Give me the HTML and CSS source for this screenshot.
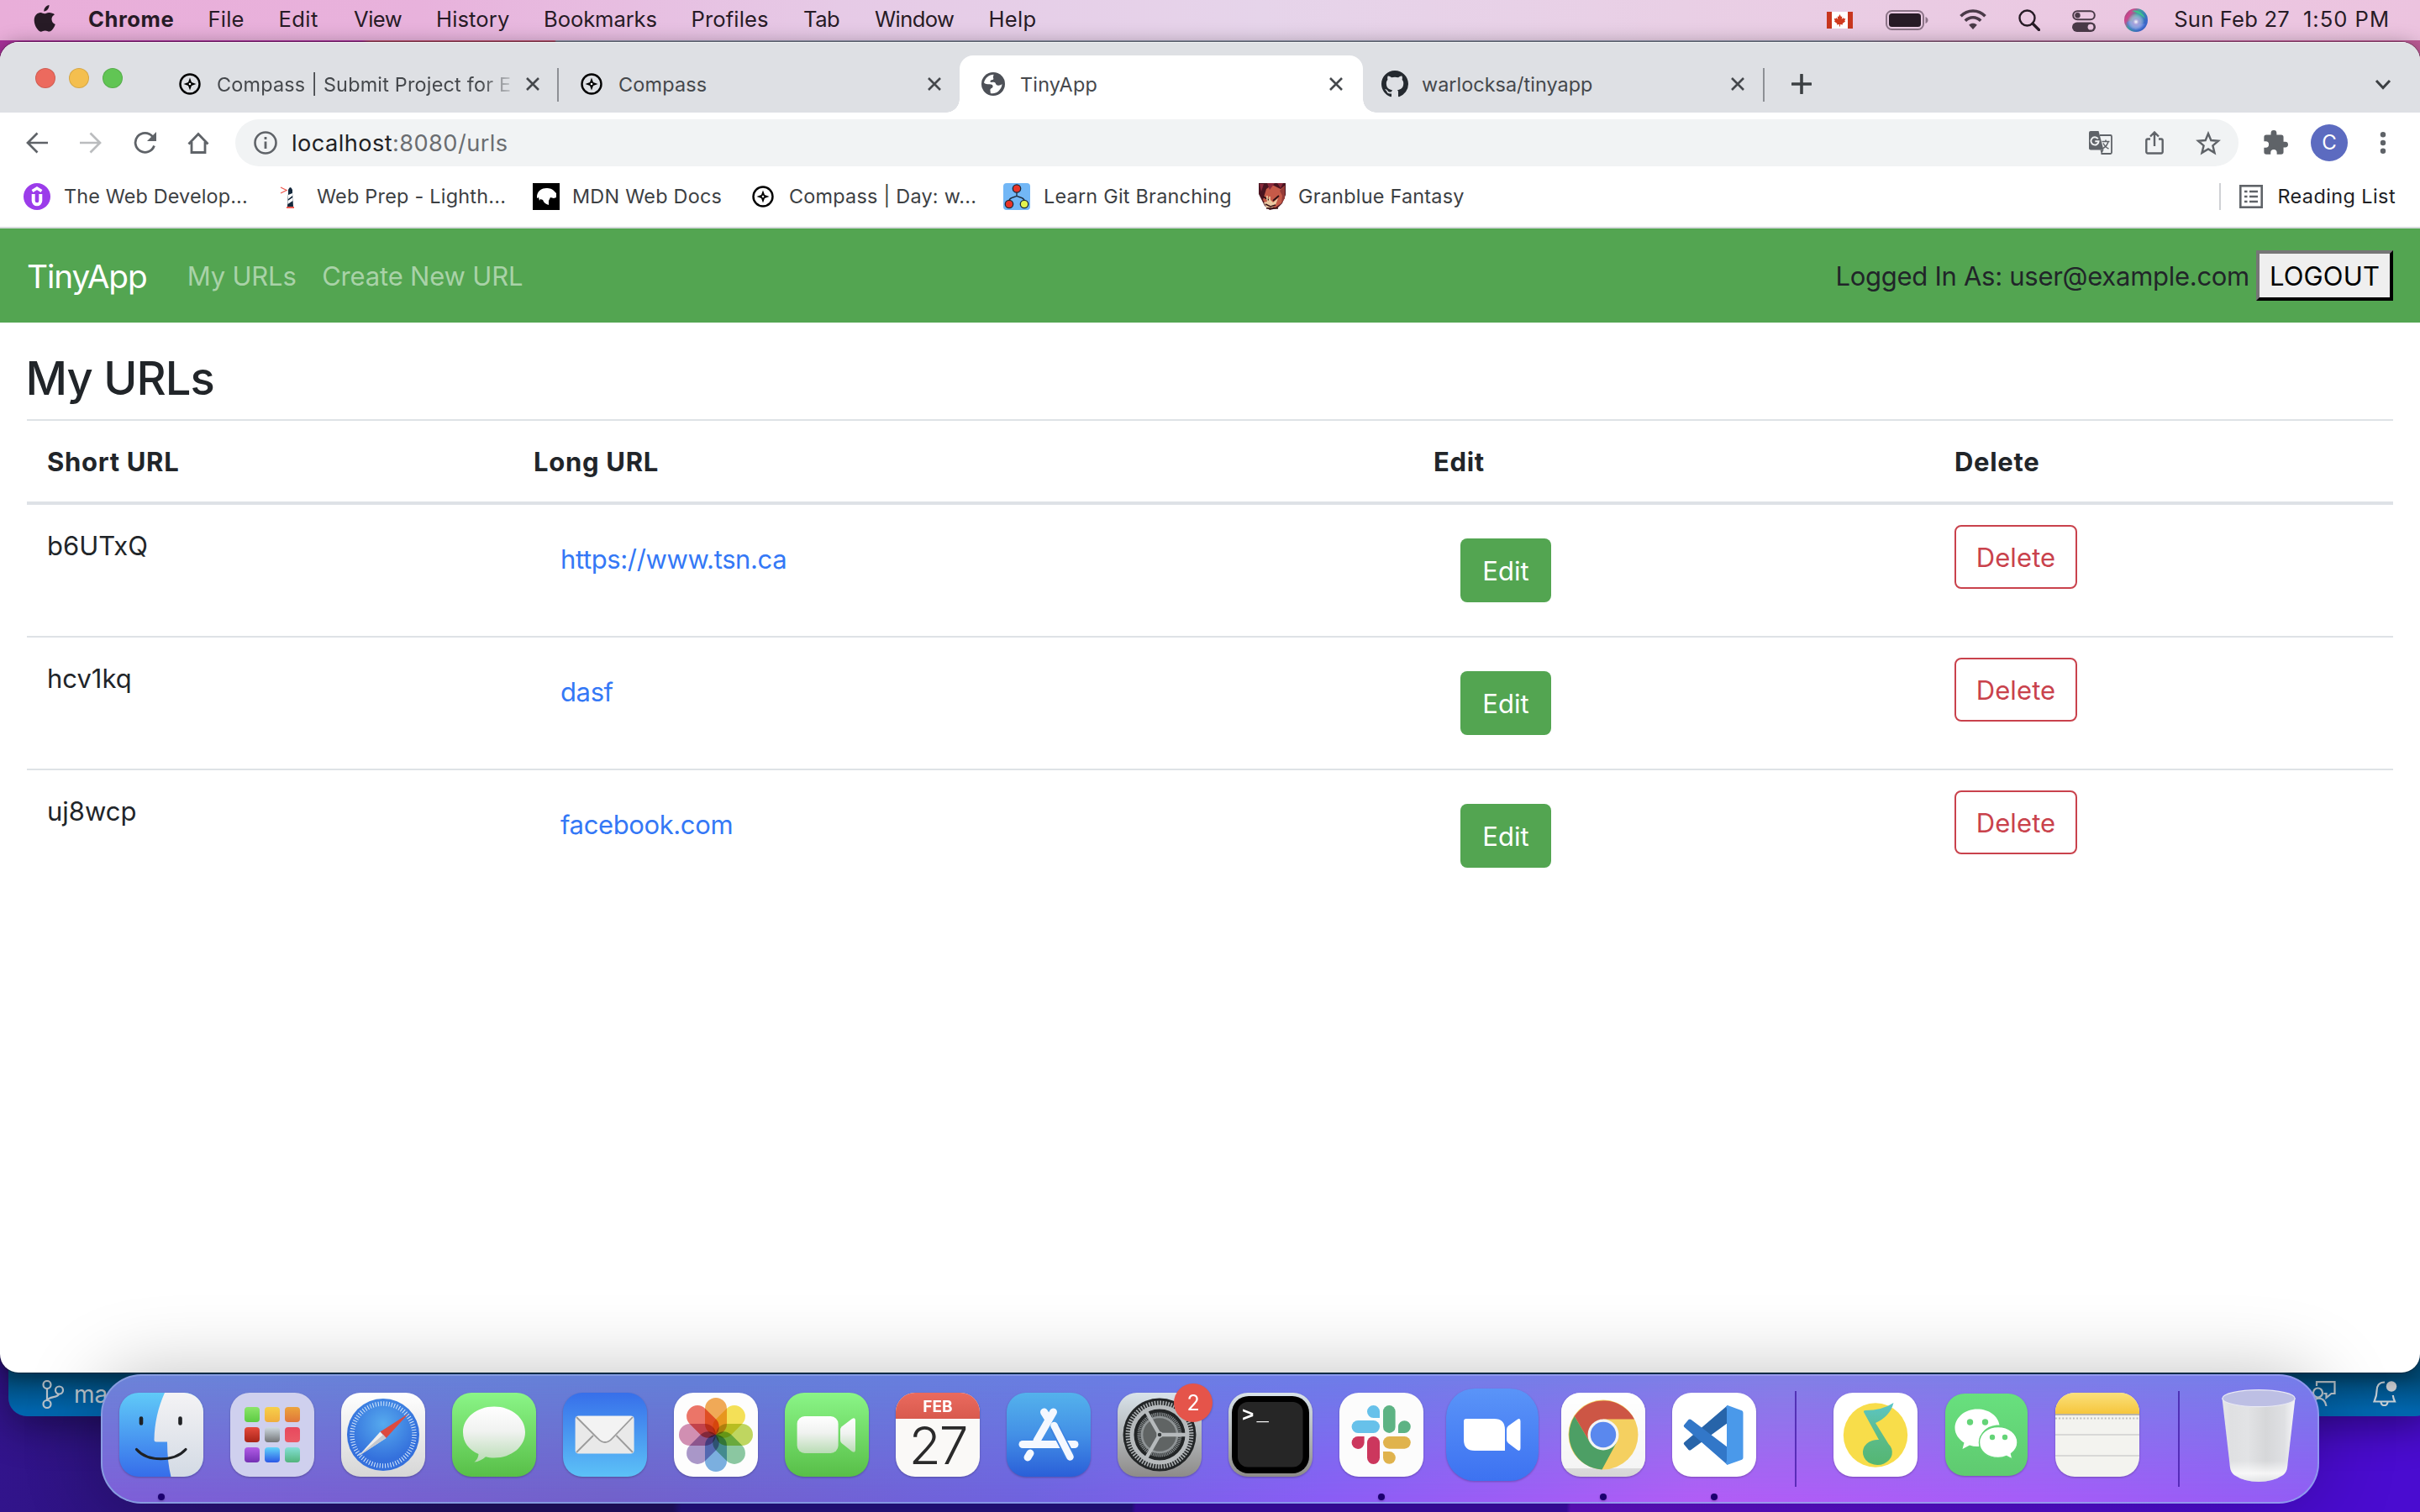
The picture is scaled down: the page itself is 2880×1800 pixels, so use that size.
FILE: index.html
```html
<!DOCTYPE html>
<html lang="en">
<head>
<meta charset="utf-8">
<title>TinyApp</title>
<link rel="stylesheet" href="styles.css">
</head>
<body>
<svg class="defs" width="0" height="0" aria-hidden="true">
  <defs>
    <symbol id="compass" viewBox="0 0 26 26"><circle cx="13" cy="13" r="11.500" fill="none" stroke="#000" stroke-width="2.400"/><path d="M13 5.500l2 5.500 5.500 2-5.500 2-2 5.500-2-5.500-5.500-2 5.500-2z" fill="#000"/><circle cx="13" cy="13" r="1.300" fill="#fff"/></symbol>
    <symbol id="close" viewBox="0 0 18 18"><path d="M2 2l14 14M16 2L2 16" stroke="#45484c" stroke-width="2.600" fill="none"/></symbol>
    <linearGradient id="gGreen" x2="0" y2="1"><stop offset="0" stop-color="#8af587"/><stop offset="1" stop-color="#58bf48"/></linearGradient>
    <linearGradient id="gWhite" x2="0" y2="1"><stop offset="0" stop-color="#fff"/><stop offset=".45" stop-color="#f0f2f0"/><stop offset="1" stop-color="#b9dcb4"/></linearGradient>
    <linearGradient id="gBlueDown" x2="0" y2="1"><stop offset="0" stop-color="#60caf8"/><stop offset="1" stop-color="#366dea"/></linearGradient>
    <linearGradient id="gMail" x2="0" y2="1"><stop offset="0" stop-color="#376fea"/><stop offset="1" stop-color="#5cc1f7"/></linearGradient>
    <linearGradient id="gStore" x2="0" y2="1"><stop offset="0" stop-color="#54b2ec"/><stop offset=".5" stop-color="#4390e6"/><stop offset="1" stop-color="#2a5fd8"/></linearGradient>
    <linearGradient id="gSilver" x2="0" y2="1"><stop offset="0" stop-color="#d9e3ea"/><stop offset="1" stop-color="#8d8b89"/></linearGradient>
    <linearGradient id="gPaper" x2="0" y2="1"><stop offset="0" stop-color="#fff"/><stop offset="1" stop-color="#d6d6d6"/></linearGradient>
    <linearGradient id="gFace" x2="0" y2="1"><stop offset="0" stop-color="#f4f3f5"/><stop offset="1" stop-color="#d3dae4"/></linearGradient>
    <radialGradient id="gSafari" cy=".35"><stop offset="0" stop-color="#56aaee"/><stop offset="1" stop-color="#3470dc"/></radialGradient>
    <linearGradient id="gZoom" x2="0" y2="1"><stop offset="0" stop-color="#5a94f8"/><stop offset="1" stop-color="#3d72f1"/></linearGradient>
    <linearGradient id="gNote" x2="0" y2="1"><stop offset="0" stop-color="#5bc6c8"/><stop offset=".5" stop-color="#5cbc8c"/><stop offset="1" stop-color="#54b672"/></linearGradient>
    <linearGradient id="gWechat" x2="0" y2="1"><stop offset="0" stop-color="#68e07e"/><stop offset="1" stop-color="#5fca70"/></linearGradient>
    <linearGradient id="gYellow" x2="0" y2="1"><stop offset="0" stop-color="#fae07c"/><stop offset="1" stop-color="#f6c63c"/></linearGradient>
    <linearGradient id="gTrash"><stop offset="0" stop-color="#e6e7e9"/><stop offset=".12" stop-color="#dfe0e2"/><stop offset=".35" stop-color="#e2e3e5"/><stop offset=".6" stop-color="#d6d7d9"/><stop offset=".85" stop-color="#dfe0e3"/><stop offset="1" stop-color="#f6f6f8"/></linearGradient>
    <linearGradient id="gTrashGlow" x2="0" y2="1"><stop offset=".75" stop-color="#fff" stop-opacity="0"/><stop offset=".9" stop-color="#fff" stop-opacity=".75"/><stop offset="1" stop-color="#e8eaec" stop-opacity=".6"/></linearGradient>
    <radialGradient id="gSiri" cx=".5" cy=".55"><stop offset="0" stop-color="#fff"/><stop offset=".35" stop-color="#b9a6e0" stop-opacity=".8"/><stop offset="1" stop-color="#fff" stop-opacity="0"/></radialGradient>
    <linearGradient id="gSiriBack" x2=".9" y2=".6"><stop offset="0" stop-color="#6d5a78"/><stop offset=".3" stop-color="#d2448e"/><stop offset=".55" stop-color="#3e9ea0"/><stop offset="1" stop-color="#3a66c8"/></linearGradient>
  </defs>
</svg>

<header class="menubar">
  <svg class="apple" viewBox="0 0 26 32"><path d="M18.500 0c.2 2-.6 3.900-1.800 5.300-1.200 1.400-2.800 2.300-4.400 2.200-.2-1.900.7-3.800 1.800-5C15.300 1.100 17.100.1 18.500 0zM25 11.200c-2.600 1.600-3.600 3.400-3.500 5.900.1 2.900 1.700 4.900 4.300 5.900-.6 1.900-1.500 3.600-2.700 5.200-1.300 1.800-2.500 3.400-4.500 3.400-1.900 0-2.500-1.100-4.900-1.100s-3.100 1.100-5 1.200c-1.900.1-3.400-1.900-4.700-3.700C1.300 24.400-.6 17.800 1.700 13.300c1.200-2.400 3.600-4.200 6.300-4.300 2-.1 3.700 1.300 5 1.300 1.200 0 3.200-1.500 5.600-1.400 2.400.1 4.900.8 6.400 2.300z" fill="#271b26"/></svg>
  <nav class="menus">
    <b>Chrome</b><span>File</span><span>Edit</span><span>View</span><span>History</span><span>Bookmarks</span><span>Profiles</span><span>Tab</span><span>Window</span><span>Help</span>
  </nav>
  <div class="status">
    <svg class="flag" viewBox="0 0 31 20"><path d="M0 0h31v20H0z" fill="#fff"/><path d="M0 0h6v20H0zM25 0h6v20h-6z" fill="#c8361e"/><path d="M15.500 3l1.500 3 1.300-.6-.5 3.500 2-1.800.5 1.200 2-.2-1 2.700.8.700-3.400 2.600.3 1.400-3-.5v2.500h-1V15l-3 .5.3-1.400-3.400-2.600.8-.7-1-2.700 2 .2.500-1.200 2 1.800-.5-3.500 1.300.6z" fill="#d03a1e"/></svg>
    <svg class="battery" viewBox="0 0 51 24"><rect x="1" y="1" width="44" height="22" rx="6.500" fill="none" stroke="#8c7488" stroke-width="2"/><rect x="4" y="4" width="38" height="16" rx="3.500" fill="#271b26"/><path d="M47.500 8c4 1.500 4 6.500 0 8z" fill="#8c7488"/></svg>
    <svg class="wifi" viewBox="0 0 32 24"><g fill="none" stroke="#4a3a48" stroke-width="3.600"><path d="M1.500 8.300C9.500-.2 22.500-.2 30.500 8.300"/><path d="M6.800 13.800c5.200-5.400 13.200-5.400 18.400 0"/></g><path d="M16 24l-4.800-5.200c2.800-2.600 6.800-2.600 9.600 0z" fill="#4a3a48"/></svg>
    <svg class="search" viewBox="0 0 26 26"><circle cx="10.500" cy="10.500" r="9" fill="none" stroke="#271b26" stroke-width="2.400"/><path d="M17 17l7.500 7.500" stroke="#271b26" stroke-width="3.200" stroke-linecap="round"/></svg>
    <svg class="control" viewBox="0 0 28 26"><rect x="1.200" y="1.200" width="25.600" height="10" rx="5" fill="none" stroke="#4a3a48" stroke-width="2"/><circle cx="6.500" cy="6.200" r="3.200" fill="#4a3a48"/><rect y="14.500" width="28" height="11.500" rx="5.750" fill="#4a3a48"/><circle cx="22" cy="20.200" r="3.400" fill="#eac6e0"/></svg>
    <svg class="siri" viewBox="0 0 28 28"><circle cx="14" cy="14" r="14" fill="url(#gSiriBack)"/><path d="M8 3q12-3 17 9-9-8-17-9z" fill="#3fc28e"/><path d="M3 17c6-6 6 4 22 1-3 10-18 12-22-1z" fill="#5a7fe0" opacity=".7"/><circle cx="14" cy="15" r="10" fill="url(#gSiri)"/></svg>
    <span class="date">Sun Feb 27</span><span class="time">1:50 PM</span>
  </div>
</header>

<section class="editor-window">
  <div class="branch"><svg viewBox="0 0 26 34"><g fill="none" stroke="#b9c3cb" stroke-width="2.200"><circle cx="6" cy="5.500" r="4.500"/><circle cx="6" cy="28.500" r="4.500"/><circle cx="20.500" cy="12" r="4.500"/><path d="M6 10v14M20 16.500c-1 5-12 2-14 8"/></g></svg><span>ma</span></div>
  <div class="editor-tools">
    <svg class="feedback" viewBox="0 0 30 30"><g fill="none" stroke="#b9c3cb" stroke-width="2.200"><path d="M7 6V1.200h21.500V15h-4l-6 5v-5h-3"/><circle cx="8.500" cy="14" r="5.500"/><path d="M1 30c1-12 16-13 17.500 0"/></g></svg>
    <svg class="bell" viewBox="0 0 30 30"><g fill="none" stroke="#c4cdd4" stroke-width="2.200"><path d="M14 1.500C7 1.500 4.500 6 4.500 12c0 6-1.500 9-3 12.500h24.500c-1.200-2.600-2-5-2.200-7.500"/><path d="M9.500 25c.5 5.500 7.500 5.500 8 0"/></g><circle cx="22" cy="6.500" r="6.200" fill="#c9ccd0"/></svg>
  </div>
</section>

<main class="browser">
  <div class="tabstrip">
    <div class="lights"><i class="red"></i><i class="amber"></i><i class="green"></i></div>
    <div class="tab t1"><svg class="fav"><use href="#compass"/></svg><span class="fade">Compass | Submit Project for E</span><svg class="x"><use href="#close"/></svg></div>
    <div class="tab t2"><svg class="fav"><use href="#compass"/></svg><span>Compass</span><svg class="x"><use href="#close"/></svg></div>
    <div class="tab t3"><svg class="globe" viewBox="0 0 28 28"><circle cx="14" cy="14" r="14" fill="#4d5057"/><path d="M14.500 2.800C9 3 4.500 6.500 3 12.500c1.500 1.800 4 1.800 6.500 1.800 3 0 4.500 1.200 4 3.200-.5 1.500-2.500 1.500-3 3-.3 1.500.5 3 .3 4.500 3 .8 7 0 9.500-2.500 2.500-2.300 4.200-5.500 4.200-8.500-1.500 1.500-3.500 2-5.500 1.500-2.500-.5-1.500-3-3.500-3.500s-4 .5-5-.5c-.5-1.500 1-2.500 2.500-2.500s1.500-1.500 1-2.500c-.4-1.200.5-2.200.5-3.700z" fill="#fff"/></svg><span>TinyApp</span><svg class="x"><use href="#close"/></svg></div>
    <div class="tab t4"><svg class="github" viewBox="0 0 16 16"><path fill="#24292f" d="M8 0C3.580 0 0 3.580 0 8c0 3.540 2.290 6.530 5.470 7.590.4.070.55-.17.55-.38 0-.19-.01-.82-.01-1.490-2.010.37-2.530-.49-2.690-.94-.09-.23-.48-.94-.82-1.130-.28-.15-.68-.52-.01-.53.63-.01 1.080.58 1.230.82.72 1.210 1.870.87 2.330.66.070-.52.28-.87.51-1.070-1.780-.2-3.640-.89-3.640-3.950 0-.87.31-1.590.82-2.150-.08-.2-.36-1.020.08-2.120 0 0 .67-.21 2.200.82.64-.18 1.320-.27 2-.27s1.360.09 2 .27c1.530-1.040 2.200-.82 2.200-.82.44 1.100.16 1.920.08 2.120.51.56.82 1.270.82 2.150 0 3.070-1.870 3.750-3.650 3.950.29.25.54.73.54 1.480 0 1.070-.01 1.930-.01 2.200 0 .21.15.46.55.38A8.010 8.010 0 0 0 16 8c0-4.420-3.580-8-8-8z"/></svg><span>warlocksa/tinyapp</span><svg class="x"><use href="#close"/></svg></div>
    <svg class="plus" viewBox="0 0 24 24"><path d="M12 1v22M1 12h22" stroke="#3c4043" stroke-width="3.600" stroke-linecap="round"/></svg>
    <svg class="chevron" viewBox="0 0 20 13"><path d="M2 2l8 8.500L18 2" fill="none" stroke="#3c4043" stroke-width="3"/></svg>
  </div>

  <div class="toolbar">
    <svg class="back" viewBox="0 0 26 26"><path d="M26 13H2M13.500 1.500L2 13l11.500 11.500" fill="none" stroke="#5f6368" stroke-width="2.700"/></svg>
    <svg class="forward" viewBox="0 0 26 26"><path d="M0 13h24M12.500 1.500L24 13 12.500 24.500" fill="none" stroke="#babcbe" stroke-width="2.700"/></svg>
    <svg class="reload" viewBox="0 0 28 28"><path d="M24.500 17.500A11.500 11.500 0 1 1 22.500 6.500" fill="none" stroke="#5f6368" stroke-width="2.800"/><path d="M27 1v11H16z" fill="#5f6368"/></svg>
    <svg class="home" viewBox="0 0 26 26"><path d="M1.500 14.500L13 2.500l11.500 12M5 12v12.500h16V12" fill="none" stroke="#5f6368" stroke-width="2.800"/></svg>
    <div class="omnibox">
      <svg class="info" viewBox="0 0 28 28"><circle cx="14" cy="14" r="12.500" fill="none" stroke="#5f6368" stroke-width="2.600"/><path d="M14 12.500V21M14 7v3" stroke="#5f6368" stroke-width="2.800"/></svg>
      <div class="url"><span>localhost</span><em>:8080/urls</em></div>
      <svg class="translate" viewBox="0 0 28 28"><path d="M13 5h12.500a1.500 1.500 0 0 1 1.500 1.500v19a1.500 1.500 0 0 1-1.500 1.500H14.500" fill="none" stroke="#5f6368" stroke-width="1.800"/><path d="M2 0h9.500l6 22.500H2a2 2 0 0 1-2-2V2a2 2 0 0 1 2-2z" fill="#5f6368"/><path d="M13.500 22.500h4L15 27.500z" fill="#5f6368"/><path d="M10.800 9.300A4.600 4.600 0 1 0 11.600 12.300H7.300" fill="none" stroke="#f1f3f4" stroke-width="1.900"/><path d="M15.500 12.500h9M20 10.500v2M23 12.500c-1 4-3.500 6.500-6 8M17 14.500c1.500 3 4 5.500 6.500 6.500" fill="none" stroke="#5f6368" stroke-width="1.500"/></svg>
      <svg class="share" viewBox="0 0 22 28"><path d="M6 9.500H3a1.700 1.700 0 0 0-1.700 1.700v13.500A1.700 1.700 0 0 0 3 26.500h16a1.700 1.700 0 0 0 1.700-1.800V11.200A1.700 1.700 0 0 0 19 9.500h-3M11 18V2M6 6.500l5-5 5 5" fill="none" stroke="#5f6368" stroke-width="2.400"/></svg>
      <svg class="star" viewBox="0 0 30 29"><path d="M15 3l3.300 8 8.700.7-6.600 5.700 2.100 8.500L15 21.400l-7.500 4.500 2.100-8.500L3 11.700l8.700-.7z" fill="none" stroke="#5f6368" stroke-width="2.400"/></svg>
    </div>
    <svg class="puzzle" viewBox="0 0 22 22"><path d="M19.500 10H18V6a2 2 0 0 0-2-2h-4V2.500a2.500 2.500 0 0 0-5 0V4H3a2 2 0 0 0-2 2v3.800h1.500a2.700 2.700 0 0 1 0 5.400H1V19a2 2 0 0 0 2 2h3.800v-1.500a2.700 2.700 0 0 1 5.400 0V21H16a2 2 0 0 0 2-2v-4h1.500a2.500 2.500 0 0 0 0-5z" fill="#5f6368"/></svg>
    <div class="avatar">C</div>
    <svg class="dots" viewBox="0 0 8 26"><g fill="#5f6368"><circle cx="4" cy="3.200" r="3.200"/><circle cx="4" cy="13" r="3.200"/><circle cx="4" cy="22.800" r="3.200"/></g></svg>
  </div>

  <div class="bookmarks">
    <a class="b1"><svg viewBox="0 0 32 32"><circle cx="16" cy="16" r="16" fill="#9b3cea"/><path d="M10.500 9.500l5.500-3.500 5.500 3.500" fill="none" stroke="#fff" stroke-width="3.400"/><path d="M11.700 13v8a4.300 4.300 0 0 0 8.600 0v-8" fill="none" stroke="#fff" stroke-width="4"/></svg><span>The Web Develop...</span></a>
    <a class="b2"><svg viewBox="0 0 32 32"><path d="M5 5l7 3.500L5 12" fill="none" stroke="#ee5a50" stroke-width="1.300"/><path d="M14 8q2.500-6 5 0v3l1 17h-7l1-17z" fill="#14283c"/><path d="M14 14l5-2v3l-5 4zM13.500 21l6-4v4l-6 4z" fill="#fff"/><path d="M12 29h9" stroke="#ee5a50" stroke-width="2"/></svg><span>Web Prep - Lighth...</span></a>
    <a class="b3"><svg viewBox="0 0 32 32"><path d="M0 0h32v32H0z" fill="#000"/><path d="M5 15c1-6 6-9 11-9 5 0 7 1 9 3l3 3v5l-3 1-4-1-2 4 0 5c-4-1-6-3-7-6l-3-1-1 2-1-4-2 1z" fill="#fff"/></svg><span>MDN Web Docs</span></a>
    <a class="b4"><svg><use href="#compass"/></svg><span>Compass | Day: w...</span></a>
    <a class="b5"><svg viewBox="0 0 32 32"><rect width="32" height="32" rx="4" fill="#72b7f6"/><g stroke="#1d2a3a" stroke-width="1.300"><path d="M16 9v6c0 2-9 1-9 6M16 15c0 2 9 1 9 6" fill="none"/><circle cx="16" cy="6.500" r="4.700" fill="#e83428"/><circle cx="7" cy="25" r="4.700" fill="#e83428"/><circle cx="25" cy="25" r="4.700" fill="#e2f24e"/></g></svg><span>Learn Git Branching</span></a>
    <a class="b6"><svg viewBox="0 0 32 32"><path d="M0 0h32v14l-4 10-6 6-9 2-6-5-4-8-3-6z" fill="#4a1420"/><path d="M9 7l7-5 10 5 5-4v15l-4 6-7 5-10-1-5-8z" fill="#c65a48"/><path d="M1 1h5l-3 9zM10 0h9l-6 8zM22 0h7l-3 6z" fill="#8a2a3c"/><path d="M31 3v15l-4 6 1-9-3-6z" fill="#963c38"/><path d="M9 17l5 3 3 3 6-5-3 8-5 4-6-1-3-6 4-1z" fill="#ecc9a2"/><path d="M5 16l7 4M24 15l-7 6" stroke="#2c1014" stroke-width="1.800"/><path d="M10 15v5M13 16v4" stroke="#f3dfb4" stroke-width="1.400"/><path d="M8 25l6 3 6-2M9 30h14" stroke="#3a1518" stroke-width="1.600" fill="none"/></svg><span>Granblue Fantasy</span></a>
    <div class="reading"><svg viewBox="0 0 28 28"><rect x="1.300" y="1.300" width="25.400" height="25.400" fill="none" stroke="#5f6368" stroke-width="2.600"/><path d="M6 8h3.500M12 8h10M6 14h3.500M12 14h10M6 20h3.500M12 20h10" stroke="#5f6368" stroke-width="2.700"/></svg><span>Reading List</span></div>
  </div>

  <div class="page">
    <nav class="navbar">
      <a class="brand">TinyApp</a>
      <a class="link">My URLs</a>
      <a class="link">Create New URL</a>
      <div class="session"><span>Logged In As: user@example.com</span><button class="logout">LOGOUT</button></div>
    </nav>
    <h1>My URLs</h1>
    <table>
      <colgroup><col class="c1"><col class="c2"><col class="c3"><col class="c4"></colgroup>
      <thead><tr><th><span>Short URL</span></th><th><span>Long URL</span></th><th><span>Edit</span></th><th><span>Delete</span></th></tr></thead>
      <tbody>
        <tr><td><span>b6UTxQ</span></td><td><a class="long">https://www.tsn.ca</a></td><td><button class="edit">Edit</button></td><td><button class="delete">Delete</button></td></tr>
        <tr><td><span>hcv1kq</span></td><td><a class="long">dasf</a></td><td><button class="edit">Edit</button></td><td><button class="delete">Delete</button></td></tr>
        <tr><td><span>uj8wcp</span></td><td><a class="long">facebook.com</a></td><td><button class="edit">Edit</button></td><td><button class="delete">Delete</button></td></tr>
      </tbody>
    </table>
  </div>
</main>

<footer class="dock">
  <div class="app running"><svg viewBox="0 0 100 100"><path d="M0 0h100v100H0z" fill="url(#gBlueDown)"/><path d="M54 0C46 18 42 36 41.500 56q0 2.500 2.500 2.500h13Q57 82 61.500 100H100V0z" fill="url(#gFace)"/><g fill="none" stroke="#1f2124" stroke-linecap="round"><path d="M26 30.500v6M72.500 30.500v6" stroke-width="4.600"/><path d="M20.500 67.500c13 15 45 15 58.500 0" stroke-width="3.200"/></g></svg></div>
  <div class="app launchpad"><i></i><i></i><i></i><i></i><i></i><i></i><i></i><i></i><i></i></div>
  <div class="app"><svg viewBox="0 0 100 100"><path d="M0 0h100v100H0z" fill="url(#gPaper)"/><circle cx="50" cy="50" r="43" fill="url(#gSafari)"/><circle cx="50" cy="50" r="37" fill="none" stroke="#d8e8fa" stroke-width="5.500" stroke-dasharray="1 2.229"/><path d="M80 25L53.500 54 46.500 46.500z" fill="#dc4a3e"/><path d="M20.500 75.500l26-29 7 7.500z" fill="#eee"/><path d="M20.500 75.500l29.500-25.500 3.500 4z" fill="#c4c8ce"/></svg></div>
  <div class="app"><svg viewBox="0 0 100 100"><path d="M0 0h100v100H0z" fill="url(#gGreen)"/><path d="M50 16.500c21 0 37 13.500 37 30.500S71 77.500 50 77.500c-4 0-7-.4-10-1.200-4 3.500-9 6-13.500 6.200 3-2.500 5-6 5-9.500C20 68 13 59 13 47c0-17 16-30.500 37-30.500z" fill="url(#gWhite)"/></svg></div>
  <div class="app"><svg viewBox="0 0 100 100"><path d="M0 0h100v100H0z" fill="url(#gMail)"/><rect x="14.600" y="27.500" width="70" height="45" rx="4" fill="#e9e9e9"/><path d="M16 71l20-20M83 71L63.500 51M16 29l25 25q9 10 18 0l24-25" fill="none" stroke="#9b9b9b" stroke-width="1.800"/><path d="M17 28l25 25q8 9 16 0l24-25z" fill="#f3f3f3"/></svg></div>
  <div class="app"><svg viewBox="0 0 100 100"><path d="M0 0h100v100H0z" fill="#fdfdfd"/><g class="petals"><rect x="37" y="6" width="26" height="44" rx="13" fill="#f1a349"/><rect x="37" y="6" width="26" height="44" rx="13" fill="#f6e04a" transform="rotate(45 50 50)"/><rect x="37" y="6" width="26" height="44" rx="13" fill="#bcd553" transform="rotate(90 50 50)"/><rect x="37" y="6" width="26" height="44" rx="13" fill="#82c59a" transform="rotate(135 50 50)"/><rect x="37" y="6" width="26" height="44" rx="13" fill="#71abdf" transform="rotate(180 50 50)"/><rect x="37" y="6" width="26" height="44" rx="13" fill="#a48fc6" transform="rotate(225 50 50)"/><rect x="37" y="6" width="26" height="44" rx="13" fill="#cf86ae" transform="rotate(270 50 50)"/><rect x="37" y="6" width="26" height="44" rx="13" fill="#ec6a5c" transform="rotate(315 50 50)"/></g></svg></div>
  <div class="app"><svg viewBox="0 0 100 100"><path d="M0 0h100v100H0z" fill="url(#gGreen)"/><rect x="14.600" y="28" width="49" height="44" rx="9" fill="url(#gWhite)"/><path d="M66 44q0-2 1.500-3.500L80 31q4-2 4 2v35q0 4-4 2l-12.500-10Q66 58.500 66 56.500z" fill="url(#gWhite)"/></svg></div>
  <div class="app calendar"><b>FEB</b><span>27</span></div>
  <div class="app"><svg viewBox="0 0 100 100"><path d="M0 0h100v100H0z" fill="url(#gStore)"/><g fill="none" stroke="#f4f8ff" stroke-width="9" stroke-linecap="round"><path d="M44.500 23l5 8"/><path d="M55.500 23L36 57"/><path d="M19 61.500h62"/><path d="M28 72l-3 5"/></g><path d="M57 41l18.500 35" fill="none" stroke="#3d82e0" stroke-width="12"/><path d="M56.500 39l19 37.500" fill="none" stroke="#f4f8ff" stroke-width="8.500" stroke-linecap="round"/></svg></div>
  <div class="app"><svg viewBox="0 0 100 100"><path d="M0 0h100v100H0z" fill="url(#gSilver)"/><circle cx="50" cy="50" r="43.500" fill="#222526"/><circle cx="50" cy="50" r="37.500" fill="none" stroke="#a9adaf" stroke-width="6" stroke-dasharray="1.700 1.572"/><circle cx="50" cy="50" r="33" fill="none" stroke="#b6babc" stroke-width="5"/><circle cx="50" cy="50" r="24" fill="none" stroke="#7f8486" stroke-width="5" stroke-dasharray="1.300 .8"/><circle cx="50" cy="50" r="21" fill="#606464" stroke="#8f9496" stroke-width="2.600"/><path d="M50 50h32M50 50L34 22M50 50L34 78" stroke="#b6babc" stroke-width="4.500"/><circle cx="50" cy="50" r="3" fill="#34383a" stroke="#b6babc" stroke-width="1.500"/></svg><span class="badge">2</span></div>
  <div class="app"><svg viewBox="0 0 100 100"><path d="M0 0h100v100H0z" fill="url(#gSilver)"/><rect x="4" y="4" width="92" height="92" rx="20" fill="#000"/><rect x="11" y="11" width="77.500" height="77.500" rx="12" fill="#262626"/><text x="16" y="34" class="prompt">&gt;</text><text x="33.500" y="33" class="prompt">_</text></svg></div>
  <div class="app running"><svg viewBox="0 0 100 100"><path d="M0 0h100v100H0z" fill="#fcfcfc"/><g fill="#67c1ea"><path d="M48 30H40.500A7.500 7.500 0 1 1 48 22.500z"/><rect x="14.600" y="33" width="33.400" height="15" rx="7.500"/></g><g fill="#5db384"><rect x="52" y="15" width="14.600" height="33" rx="7.300"/><path d="M70 48v-7.500A7.400 7.400 0 1 1 77.500 48z"/></g><g fill="#cc375d"><path d="M29.600 52v7.500A7.500 7.500 0 1 1 22 52z"/><rect x="33" y="52" width="15" height="33" rx="7.500"/></g><g fill="#e0b34d"><rect x="52" y="52" width="32.800" height="14.700" rx="7.350"/><path d="M52 70h7.500A7.400 7.400 0 1 1 52 77.500z"/></g></svg></div>
  <div class="app zoom"><svg viewBox="0 0 110 110"><path d="M0 0h110v110H0z" fill="url(#gZoom)"/><path d="M24 36h33q13 0 13 13v25H34q-13 0-13-13V39q0-3 3-3zM72 49q0-3 2-4.500L84.500 37q4-2.500 4 2v32q0 4.500-4 2L74 65q-2-1.500-2-4z" fill="#fff"/></svg></div>
  <div class="app running"><svg viewBox="0 0 100 100"><path d="M0 0h100v100H0z" fill="url(#gPaper)"/><path d="M0 0h100v90H0z" fill="#fff" opacity=".7"/><circle cx="50" cy="50" r="41.500" fill="#f5d060"/><path d="M15.700 28A41.500 41.500 0 0 1 87 31.500H50L34 59z" fill="#cd5645"/><path d="M15.700 28A41.500 41.500 0 0 0 48.500 91.500L66 59 34 59z" fill="#4d9f65"/><circle cx="50" cy="50" r="18.500" fill="#f4f4f4"/><circle cx="50" cy="50" r="15.200" fill="#5a88ee"/></svg></div>
  <div class="app running"><svg viewBox="0 0 100 100"><path d="M0 0h100v100H0z" fill="#fff"/><path d="M66 15L14.500 59q-1.500 1.500 0 3l5 6q1.500 1 3 0L66 36z" fill="#2764a9"/><path d="M66 86L14.500 41q-1.500-1.500 0-3l5-6q1.500-1 3 0L66 65z" fill="#3277c8"/><path d="M66 15q-3 1-1 4v62q-2 4 1 4.700l17-6q1.500-.7 1.500-2.500V24q0-2-1.500-2.700z" fill="#4a99ea"/></svg></div>
  <hr>
  <div class="app"><svg viewBox="0 0 100 100"><path d="M0 0h100v100H0z" fill="#fff"/><circle cx="50" cy="50.500" r="38.200" fill="#f8dd4a"/><path d="M36 23q-.5-2 2-2 20 0 33.500-9-4 16-21.500 24l15.500 25A17.500 15 0 1 1 54 56z" fill="url(#gNote)"/></svg></div>
  <div class="app wechat"><svg viewBox="0 0 98 98"><path d="M0 0h98v98H0z" fill="url(#gWechat)"/><path d="M38 18.500c14 0 25 8 26.500 19C50 37 39.500 46 40.500 63q-6 .5-11.500-1.500l-8.500 4.500 2-7.500C16 54.500 11.500 48 11.500 41c0-12.500 12-22.500 26.500-22.500z" fill="#fff"/><path d="M63 39.500c13 0 23 8.500 23 18.700 0 5.500-3 10-7.500 13.500l1.500 6.500-7-3.700q-4.500 2-10 2c-13 0-22.500-8-22.500-18.300C40.500 48 50 39.500 63 39.500z" fill="#fff" stroke="#64d477" stroke-width="1.500"/><g fill="#64d477"><circle cx="29.500" cy="34" r="3.700"/><circle cx="47.500" cy="34" r="3.700"/><circle cx="56" cy="52" r="3.200"/><circle cx="71" cy="52" r="3.200"/></g></svg></div>
  <div class="app"><svg viewBox="0 0 100 100"><path d="M0 0h100v100H0z" fill="#f3f3ef"/><path d="M0 0h100v25H0z" fill="url(#gYellow)"/><path d="M0 26h100" stroke="#a8a08c" stroke-width="1.500"/><path d="M0 30.500h100" stroke="#bbb" stroke-width="1.800" stroke-dasharray="1.800 2.400"/><path d="M0 50h100M0 75h100" stroke="#d0d0d0" stroke-width="1.500"/></svg></div>
  <hr>
  <svg class="trash" viewBox="0 0 88 110"><path d="M.5 10.500L10 93q1 6 5 9 12 8 29 8t29-8q4-3 5-9l9.500-82.500z" fill="url(#gTrash)"/><path d="M.5 10.500L10 93q1 6 5 9 12 8 29 8t29-8q4-3 5-9l9.500-82.500z" fill="url(#gTrashGlow)"/><ellipse cx="44" cy="10.700" rx="43.200" ry="10" fill="#bdbfe4" stroke="#e9e9f4" stroke-width="1.200"/></svg>
</footer>
</body>
</html>
```
FILE: styles.css
```css
* { box-sizing: border-box; }
html, body { margin: 0; }
body {
  position: relative;
  width: 2880px;
  height: 1800px;
  overflow: hidden;
  font-family: Inter, "Liberation Sans", sans-serif;
  color: #212529;
  background:
    linear-gradient(90deg, #a8319a 0 430px, #b8506e 440px 660px, #8d94a8 662px 2200px, #a8789a 2300px, #bf5c98 2700px) 0 0 / 100% 90px no-repeat,
    linear-gradient(93deg, #32148c 0, #1f1060 560px 810px, #241280 820px 1355px, #3a0ca5 1360px 1872px, #6010c4 1877px, #4a0cd0 2700px) 0 100% / 100% 200px no-repeat,
    #30138c;
}
.defs { position: absolute; }
svg { display: block; flex: none; }

/* macOS menu bar */
.menubar {
  height: 48px;
  display: flex;
  align-items: center;
  padding: 0 36px 0 40px;
  font-size: 25.600px;
  color: #271b26;
  background: linear-gradient(90deg, #e9aed9 0, #e8b2dc 500px, #e6cae6 1000px, #e6d4ea 1500px, #e9cfe5 2000px, #ecc3df 2880px);
}
.apple { width: 26px; height: 32px; margin-top: -4px; }
.menus { display: flex; margin: 0 auto 0 39px; padding-bottom: 3px; white-space: nowrap; }
.menus :nth-child(1) { width: 142.500px; letter-spacing: .56px; }
.menus :nth-child(2) { width: 84px; letter-spacing: .16px; }
.menus :nth-child(3) { width: 89.500px; letter-spacing: .4px; }
.menus :nth-child(4) { width: 98px; letter-spacing: -.5px; }
.menus :nth-child(5) { width: 128px; letter-spacing: .13px; }
.menus :nth-child(6) { width: 175.500px; letter-spacing: -.1px; }
.menus :nth-child(7) { width: 133.500px; letter-spacing: .12px; }
.menus :nth-child(8) { width: 85px; letter-spacing: -.5px; }
.menus :nth-child(9) { width: 135.500px; letter-spacing: -.6px; }
.menus :nth-child(10) { letter-spacing: .29px; }
.status { display: flex; align-items: center; }
.flag { width: 31px; height: 20px; margin-right: 39px; }
.battery { width: 51px; height: 24px; margin-right: 37px; }
.wifi { width: 32px; height: 24px; margin: -2px 38px 0 0; }
.search { width: 26px; height: 26px; margin-right: 38px; }
.control { width: 28px; height: 26px; margin: 2px 34px 0 0; }
.siri { width: 28px; height: 28px; margin-right: 31px; }
.date { margin-right: 16px; padding-bottom: 3px; letter-spacing: .18px; }
.time { padding-bottom: 3px; letter-spacing: .99px; }

/* Editor window peeking out below the browser */
.editor-window {
  position: absolute;
  left: 10px;
  top: 1500px;
  width: 2886px;
  height: 186px;
  padding: 0 42px 0 40px;
  display: flex;
  justify-content: space-between;
  align-items: flex-end;
  border-radius: 0 0 22px 22px;
  background: linear-gradient(#004a76 140px, #0065ad 180px);
  box-shadow: 0 10px 50px rgba(0, 0, 0, .45);
}
.branch { display: flex; align-items: center; gap: 12px; height: 52px; color: #b9c3cb; font-size: 28px; }
.branch svg { width: 26px; height: 34px; }
.editor-tools { display: flex; gap: 44px; height: 42px; }
.feedback, .bell { width: 30px; height: 30px; }

/* Browser window */
.browser {
  position: absolute;
  left: 0;
  top: 50px;
  width: 2880px;
  height: 1584px;
  border-radius: 22px;
  overflow: hidden;
  background: #fff;
  box-shadow: 0 0 0 1px rgba(0, 0, 0, .25), 0 4px 24px rgba(0, 0, 0, .4);
}
.tabstrip {
  height: 84px;
  display: flex;
  align-items: stretch;
  background: #dee0e4;
  font-size: 23.400px;
  letter-spacing: .2px;
  color: #45484c;
  box-shadow: inset 0 1px #f4f5f6;
}
.lights { display: flex; gap: 16px; margin-left: 42px; padding-top: 31px; width: 155px; }
.lights i { width: 24px; height: 24px; border-radius: 50%; border: 1px solid rgba(0, 0, 0, .12); }
.red { background: #ec6a5e; }
.amber { background: #f4bf4f; }
.green { background: #61c554; }
.tab { position: relative; display: flex; align-items: center; margin-top: 16px; padding: 0 22px 0 16px; border-radius: 16px 16px 0 0; white-space: nowrap; }
.tab span { flex: 1; min-width: 0; }
.fav { width: 26px; height: 26px; margin-right: 19px; }
.x { width: 18px; height: 18px; }
.t1 { width: 468px; }
.t2 { width: 477px; padding: 0 21px 0 26px; }
.t1::after, .t4::after { content: ""; position: absolute; right: 0; top: 15px; width: 2px; height: 40px; background: #8d9095; }
.fade { -webkit-mask-image: linear-gradient(90deg, #000 314px, transparent 358px); mask-image: linear-gradient(90deg, #000 314px, transparent 358px); }
.t3 { width: 480px; padding: 0 23px 0 26px; background: #fff; }
.t3::before, .t3::after { content: ""; position: absolute; bottom: 0; width: 16px; height: 16px; }
.t3::before { left: -16px; background: radial-gradient(circle at 0 0, transparent 15.500px, #fff 16px); }
.t3::after { right: -16px; background: radial-gradient(circle at 100% 0, transparent 15.500px, #fff 16px); }
.globe { width: 28px; height: 28px; margin-right: 18px; }
.t4 { width: 478px; padding: 0 23px 0 22px; letter-spacing: .03px; }
.github { width: 32px; height: 32px; margin-right: 16px; }
.plus { width: 24px; height: 24px; margin: 38px 0 0 32px; }
.chevron { width: 20px; height: 13px; margin: 44px 34px 0 auto; }

.toolbar { height: 72px; display: flex; align-items: center; padding: 0 40px 0 31px; }
.back, .forward, .home { width: 26px; height: 26px; }
.back, .forward { margin-right: 38px; }
.reload { width: 28px; height: 28px; margin-right: 36px; }
.home { margin-right: 31px; }
.omnibox { flex: 1; height: 56px; border-radius: 28px; background: #f1f3f4; display: flex; align-items: center; padding: 0 21px 0 22px; }
.info { width: 28px; height: 28px; margin-right: 17px; }
.url { flex: 1; font-size: 27.200px; letter-spacing: .43px; color: #202124; }
.url em { font-style: normal; color: #6a6d71; }
.translate { width: 28px; height: 28px; margin-right: 39px; }
.share { width: 22px; height: 28px; margin-right: 38px; }
.star { width: 30px; height: 29px; }
.puzzle { width: 30px; height: 30px; margin: 0 27px 0 29px; }
.avatar { width: 44px; height: 44px; border-radius: 50%; background: #5c6bc0; color: #fff; font-size: 24px; line-height: 44px; text-align: center; }
.dots { width: 8px; height: 26px; margin-left: 38px; }

.bookmarks { height: 66px; padding: 5px 29px 13px 28px; border-bottom: 2px solid #d8dbde; display: flex; align-items: center; font-size: 23.400px; letter-spacing: .24px; color: #3c4043; white-space: nowrap; }
.bookmarks span { margin-top: -1px; }
.bookmarks a { display: flex; align-items: center; gap: 16px; }
.bookmarks a svg { width: 32px; height: 32px; }
.bookmarks .b4 svg { width: 26px; height: 26px; margin-right: 2px; }
.b1 { width: 301px; letter-spacing: .15px; }
.b2 { width: 305px; }
.bookmarks .b3, .bookmarks .b6 { gap: 15px; }
.b3 { width: 261px; }
.b4 { width: 299px; }
.b5 { width: 304px; }
.reading { margin-left: auto; padding-left: 22px; height: 32px; display: flex; align-items: center; gap: 17px; border-left: 2px solid #cfd1d4; color: #202124; letter-spacing: .44px; }
.reading svg { width: 28px; height: 28px; }

/* TinyApp page */
.page { font-size: 31px; }
.navbar { height: 112px; padding: 0 32px; display: flex; align-items: center; background: #53a551; }
.brand { font-size: 38.800px; letter-spacing: -1.080px; color: #fff; margin-right: 48px; }
.link { color: #a9d2a8; margin-right: 30.500px; letter-spacing: -.18px; }
.session { margin-left: auto; display: flex; align-items: center; gap: 8px; letter-spacing: -.28px; }
button { font-family: inherit; font-size: 31px; padding: 0; margin: 0; }
.logout { width: 163px; height: 60px; border: 4px outset #767676; border-color: #767676 #212121 #212121 #767676; background: #efefef; color: #000; letter-spacing: .15px; }
h1 { margin: 32px 0 15px; padding: 0 30.500px; font-size: 54.300px; line-height: 68px; font-weight: 500; letter-spacing: -.95px; }
table { width: 2816px; margin: 0 32px; table-layout: fixed; border-collapse: separate; border-spacing: 0; }
.c1 { width: 579px; } .c2 { width: 1071px; } .c3 { width: 620px; } .c4 { width: 546px; }
th, td { padding: 24px; text-align: left; vertical-align: top; line-height: 48px; border-top: 2px solid #dee2e6; }
th { height: 102px; border-bottom: 4px solid #dee2e6; font-weight: 700; letter-spacing: .7px; }
td { height: 158px; }
th span, td span, .long { position: relative; top: 1px; }
tbody tr:first-child td { height: 156px; border-top: 0; }
.long { display: inline-block; margin: 16px 32px; color: #3478f6; letter-spacing: -.38px; }
.edit, .delete { display: block; height: 76px; border-radius: 8px; }
.edit { width: 108px; margin: 16px 32px; border: 0; background: #53a551; color: #fff; }
.delete { width: 146px; border: 2px solid #c9424c; background: #fff; color: #c9424c; letter-spacing: .1px; }

/* Dock */
.dock {
  position: absolute;
  left: 120px;
  top: 1636px;
  width: 2640px;
  height: 154px;
  padding: 0 26px 0 20px;
  display: flex;
  gap: 32px;
  border: 2px solid rgba(255, 255, 255, .2);
  border-radius: 48px;
  background: linear-gradient(90deg, #6c84d9, #6480d8 700px, #6e7de9 1500px, #8280e6 2000px, #757eea) border-box;
  box-shadow: 0 0 90px rgba(0, 0, 0, .25);
}
.dock::before {
  content: "";
  position: absolute;
  inset: 0;
  border-radius: 46px;
  background: linear-gradient(90deg, #7e5ed8, #7260ca 600px, #7062de 1100px, #8a5cf5 1450px, #b25cf6 1900px, #a65cf8 2300px, #925cf4);
  -webkit-mask-image: linear-gradient(transparent, #000);
  mask-image: linear-gradient(transparent, #000);
}
.app { position: relative; flex: none; width: 100px; height: 100px; margin-top: 20px; border-radius: 23px; filter: drop-shadow(0 1px 1px rgba(0, 0, 0, .25)); }
.app svg { width: 100%; height: 100%; border-radius: 23px; }
.running::after { content: ""; position: absolute; left: 46px; top: 120px; width: 8px; height: 8px; border-radius: 50%; background: #1c0070; }
.launchpad { background: #cfd0ee; display: grid; grid-template-columns: repeat(3, 18px); grid-auto-rows: 18px; gap: 6.200px; padding: 16.600px; }
.launchpad i { border-radius: 4px; background: linear-gradient(#8be56a, #5ccb42); }
.launchpad i:nth-child(2) { background: linear-gradient(#f7d04a, #f0ad3e); }
.launchpad i:nth-child(3) { background: linear-gradient(#eca43c, #e0763a); }
.launchpad i:nth-child(4) { background: linear-gradient(#e64a3c, #a82418); }
.launchpad i:nth-child(5) { background: linear-gradient(#cfdae2, #737577); }
.launchpad i:nth-child(6) { background: linear-gradient(#e8485e, #ea5a66); }
.launchpad i:nth-child(7) { background: linear-gradient(#b25ce6, #7430b4); }
.launchpad i:nth-child(8) { background: linear-gradient(#60d4fa, #2c58e6); }
.launchpad i:nth-child(9) { background: linear-gradient(#84e0d6, #52b47c); }
.petals rect { mix-blend-mode: multiply; opacity: .92; }
.calendar { overflow: hidden; background: #faf9f7; display: flex; flex-direction: column; align-items: center; }
.calendar b { width: 100%; height: 31px; line-height: 34px; text-align: center; font-size: 19px; color: #fff; background: linear-gradient(#ea6a5e, #d85a4e); }
.calendar span { font-size: 62px; line-height: 64px; font-weight: 300; letter-spacing: -2px; color: #2a2a2a; }
.badge { position: absolute; left: 67px; top: -11px; width: 46px; height: 46px; border-radius: 50%; background: #e5544a; color: #fff; font-size: 25px; line-height: 46px; text-align: center; }
.prompt { font: bold 24px "Liberation Mono", monospace; fill: #fff; }
.zoom { width: 110px; height: 110px; margin: 15px -5px 0; }
.zoom svg { border-radius: 34px; }
.dock hr { position: relative; flex: none; width: 2px; height: 114px; margin: 18px 12px 0 14px; border: 0; background: rgba(60, 20, 160, .7); }
.wechat { width: 98px; height: 98px; margin: 21px 1px 0; }
.trash { position: relative; width: 88px; height: 110px; margin: 16px 0 0 6px; }
```
